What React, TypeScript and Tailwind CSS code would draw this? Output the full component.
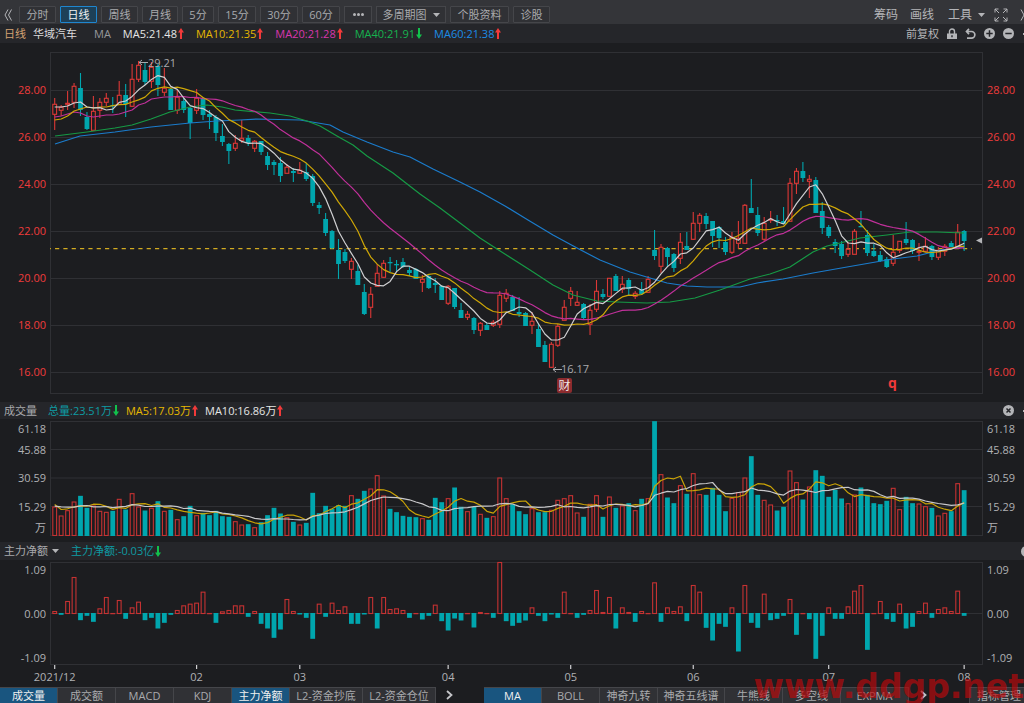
import React from "react";

type Candle = [up: 0 | 1, high: number, top: number, bottom: number, low: number];

const W = 933;
const STEP = 6.45;
const xAt = (i: number) => 4.7 + STEP * i;
const pct = (x: number) => `${(x / W) * 100}%`;

const RED = "#dc3836";
const CYAN = "#00a6ae";
const BG = "#1c1d20";
const GRID = "#2f3034";

// up flag, high, body top, body bottom, low (chart units, 47 per 2.00 of price)
const candles: Candle[] = [
  [1,98,104,114,130],[1,105,107,110,116],[1,91,103,104,110],[1,83,86,102,108],[0,73,88,110,116],
  [0,112,117,129,130],[1,96,111,130,130],[1,98,102,110,118],[1,93,98,102,106],[0,97,105,106,113],
  [1,81,95,104,105],[0,84,95,104,117],[1,64,79,106,107],[1,61,65,79,82],[0,62,70,82,85],
  [1,62,67,81,88],[0,64,66,85,96],[1,68,88,92,96],[0,88,89,110,110],[1,90,97,110,114],
  [0,98,101,110,113],[0,107,108,123,139],[1,89,98,110,114],[0,97,99,115,120],[0,110,114,117,129],
  [0,115,117,133,141],[0,124,136,142,146],[0,143,144,151,164],[1,135,143,148,151],[1,120,138,140,143],
  [0,135,138,143,146],[1,140,141,148,152],[0,141,141,152,155],[0,152,156,165,170],[0,160,162,165,175],
  [0,157,163,176,182],[1,164,167,173,173],[0,168,171,173,182],[1,162,170,173,174],[0,163,172,179,181],
  [0,174,176,203,206],[0,202,205,208,214],[0,213,219,233,236],[0,230,231,248,249],[0,239,250,264,279],
  [0,249,252,261,263],[1,258,261,269,279],[0,265,271,285,285],[0,284,292,314,315],[1,287,294,307,318],
  [1,264,273,286,286],[1,260,263,277,278],[0,257,262,263,272],[0,260,264,265,272],[0,258,262,267,268],
  [0,267,270,273,276],[0,268,269,279,279],[1,275,279,282,292],[0,275,276,288,289],[0,278,283,285,293],
  [0,285,286,300,300],[1,285,286,303,305],[0,288,288,307,309],[0,303,310,318,318],[1,311,314,317,320],
  [0,317,318,330,334],[1,322,323,330,336],[0,323,325,330,330],[1,320,322,325,327],[1,291,295,324,328],
  [1,289,293,298,302],[0,295,297,311,311],[0,297,312,314,317],[0,312,313,326,326],[1,312,321,325,334],
  [0,323,329,347,347],[0,341,345,362,362],[1,342,344,367,368],[1,324,326,345,347],[1,300,307,320,320],
  [1,287,291,298,306],[1,291,302,305,306],[0,303,304,318,319],[1,304,310,324,335],[1,280,291,309,312],
  [0,289,294,297,299],[1,278,278,296,297],[0,274,276,291,291],[1,276,284,289,293],[0,278,280,289,295],
  [1,291,293,296,299],[0,282,289,294,295],[1,276,279,292,293],[0,230,250,256,260],[1,244,247,266,273],
  [0,247,248,257,267],[0,253,254,268,272],[1,233,242,258,264],[0,232,246,250,250],[1,212,223,239,240],
  [1,213,215,223,232],[0,213,216,224,229],[0,221,221,236,247],[0,226,227,238,248],[0,237,242,252,255],
  [1,232,237,252,254],[1,221,238,243,249],[1,204,205,243,243],[0,179,208,213,213],[0,207,215,233,236],
  [1,217,223,239,241],[1,211,219,220,223],[0,215,220,221,226],[0,207,221,224,224],[1,178,183,221,221],
  [1,168,171,183,194],[0,162,171,178,182],[1,175,179,181,198],[0,177,180,213,213],[0,202,211,228,234],
  [0,225,227,236,238],[0,239,242,246,253],[0,241,244,256,259],[1,242,249,254,257],[1,229,231,254,254],
  [0,211,226,227,227],[0,230,235,253,256],[0,244,251,256,257],[0,251,255,261,262],[0,257,259,267,268],
  [1,235,252,263,266],[1,241,241,250,253],[0,222,239,243,245],[0,239,240,251,254],[1,243,251,252,261],
  [1,237,246,251,252],[0,245,246,257,260],[1,247,250,257,260],[1,244,246,251,256],[0,241,243,247,247],
  [1,224,232,248,248],[0,230,231,241,251],
];

const volumes = [
  320,347,331,305,288,324,317,333,336,333,297,329,280,320,332,324,304,333,330,358,349,318,346,339,
  346,333,349,351,364,374,373,382,367,346,324,341,352,366,374,369,279,340,318,327,316,318,286,297,
  273,266,226,287,327,337,348,351,352,355,360,294,307,295,263,321,334,321,342,354,349,233,295,313,
  334,343,325,337,337,330,300,295,286,338,351,312,286,351,290,324,317,310,331,297,295,64,223,293,
  310,256,282,220,283,285,264,285,334,294,277,233,169,285,300,314,332,321,212,247,299,260,211,228,
  291,270,296,310,284,263,285,310,313,303,264,328,291,310,311,319,324,347,339,334,250,271,
].map((v) => (407 - v) / 3);

const netFlow = [
  214,224,184,112,240,227,245,206,172,220,181,236,203,186,240,233,265,248,224,211,197,192,189,156,
  220,248,215,211,197,197,230,214,251,265,293,268,178,214,223,233,296,192,230,189,211,200,251,251,
  223,172,265,172,208,206,211,233,220,238,227,195,243,271,235,241,220,262,217,220,233,67,243,257,
  248,241,203,227,243,223,233,156,220,233,224,211,151,217,172,265,203,217,245,214,220,128,245,203,
  214,200,243,136,156,263,301,251,260,203,334,136,248,263,162,240,236,227,178,284,220,237,356,287,
  203,236,236,200,153,136,329,220,184,237,245,192,265,260,214,189,233,208,203,214,153,227,
].map((v) => (220 - v) / 3);

const ma40 = "5,136 37,132 65,128 82,125 101,119 120,112 140,107 157,105 172,107 185,110 220,113 240,116 257,121 270,126 287,136 303,145 317,156 343,173 370,194 390,208 410,223 430,238 447,249 480,270 503,285 523,295 547,301 567,302 597,303 620,302 645,298 670,290 700,279 720,274 740,267 763,252 777,246 790,243 810,238 837,235 860,232 887,232 914,233";
const ma60 = "5,144 30,136 65,132 101,127 140,123 167,121 190,120 207,119 250,120 280,125 293,132 317,142 343,152 360,157 383,169 410,182 430,192 455,206 478,220 503,235 527,248 550,260 580,272 600,278 617,283 637,286 657,287 690,287 707,283 733,279 763,273 797,267 820,263 843,259 867,256 890,250 914,247";

function average(values: number[], span: number, seed: number[]) {
  return values
    .map((_, i) => {
      const y =
        i < span - 1
          ? seed[i]
          : values.slice(i - span + 1, i + 1).reduce((a, b) => a + b, 0) / span;
      return `${xAt(i).toFixed(1)},${y.toFixed(1)}`;
    })
    .join(" ");
}

const closes = candles.map((c) => (c[0] ? c[2] : c[3]));
const volumeY = volumes.map((v) => 114.5 - v);
const toVol = (z: number) => 114.5 - (407 - z) / 3;

const months = [
  { at: 0, label: "2021/12" },
  { at: 22, label: "02" },
  { at: 38, label: "03" },
  { at: 61, label: "04" },
  { at: 80, label: "05" },
  { at: 99, label: "06" },
  { at: 120, label: "07" },
  { at: 141, label: "08" },
];

function Line({ points, color }: { points: string; color: string }) {
  return <polyline points={points} fill="none" stroke={color} strokeWidth="1.2" strokeLinejoin="round" />;
}

function Arrow({ down = false }: { down?: boolean }) {
  return (
    <svg width="6" height="11" viewBox="0 0 6 11" className={down ? "rotate-180 text-[#12c14c]" : "text-[#f23a3a]"} aria-hidden="true">
      <path d="M3 0 6 4.5H4V11H2V4.5H0Z" fill="currentColor" />
    </svg>
  );
}

function Caret() {
  return (
    <svg width="7" height="4" viewBox="0 0 7 4" aria-hidden="true">
      <path d="M0 0h7L3.500 4Z" fill="#b4b5b8" />
    </svg>
  );
}

function Gear() {
  return (
    <svg width="12" height="12" viewBox="0 0 12 12" aria-hidden="true">
      <path d="M6 1v10M1 6h10M2.500 2.500l7 7M9.500 2.500l-7 7" stroke="#b4b5b8" strokeWidth="2" />
      <circle cx="6" cy="6" r="3.600" fill="#b4b5b8" />
      <circle cx="6" cy="6" r="1.600" fill="#25262a" />
    </svg>
  );
}

function Reading({ text, color, down }: { text: string; color: string; down?: boolean }) {
  return (
    <span className={`flex items-center gap-px ${color}`}>
      {text}
      <Arrow down={down} />
    </span>
  );
}

function Period({ label, width, active = false }: { label: string; width: string; active?: boolean }) {
  return (
    <button
      type="button"
      className={`flex h-[17px] shrink-0 items-center justify-center rounded-[1px] border ${width} ${
        active ? "border-[#1f86cf] bg-[#1d4058] text-[#f0f0f0]" : "border-[#45464a] bg-[#303135] text-[#a9aaad]"
      }`}
    >
      {label}
    </button>
  );
}

function Toolbar() {
  return (
    <nav className="flex h-6 items-end justify-between bg-[#343539] pb-px">
      <div className="flex items-center gap-1">
        <button type="button" aria-label="收起" className="flex w-[15px] justify-center">
          <svg width="8" height="12" viewBox="0 0 8 12" fill="none" stroke="#b4b5b8" aria-hidden="true">
            <path d="M4 .5 1 6l3 5.500M7.500.5l-3 5.500 3 5.500" />
          </svg>
        </button>
        <Period label="分时" width="w-[37px]" />
        <Period label="日线" width="w-[37px]" active />
        <Period label="周线" width="w-[37px]" />
        <Period label="月线" width="w-[36px]" />
        <Period label="5分" width="w-[32px]" />
        <Period label="15分" width="w-[38px]" />
        <Period label="30分" width="w-[38px]" />
        <Period label="60分" width="w-[38px]" />
        <button type="button" aria-label="更多" className="flex h-[17px] w-7 shrink-0 items-center justify-center gap-px border border-[#45464a] bg-[#303135]">
          <i className="size-[3px] rounded-full bg-[#b4b5b8]" />
          <i className="size-[3px] rounded-full bg-[#b4b5b8]" />
          <i className="size-[3px] rounded-full bg-[#b4b5b8]" />
        </button>
        <button type="button" className="flex h-[17px] w-[70px] shrink-0 items-center justify-center gap-[6px] border border-[#45464a] bg-[#303135] text-[#a9aaad]">
          多周期图
          <Caret />
        </button>
        <Period label="个股资料" width="w-[59px]" />
        <Period label="诊股" width="w-[37px]" />
      </div>
      <div className="flex h-[17px] items-center overflow-hidden text-xs text-[#b4b5b8]">
        <button type="button" className="mr-3 shrink-0">筹码</button>
        <button type="button" className="mr-[14px] shrink-0">画线</button>
        <button type="button" className="mr-[9px] flex shrink-0 items-center gap-[6px]">
          工具
          <Caret />
        </button>
        <button type="button" aria-label="全屏" className="mr-3 shrink-0">
          <svg width="14" height="14" viewBox="0 0 14 14" fill="none" stroke="#b4b5b8" aria-hidden="true">
            <path d="M1 4.500V1h3.500M1 1l4 4M9.500 1H13v3.500M13 1 9 5M1 9.500V13h3.500M1 13l4-4M13 9.500V13H9.500M13 13 9 9" />
          </svg>
        </button>
        <svg width="4" height="12" viewBox="0 0 4 12" fill="none" stroke="#b4b5b8" aria-hidden="true">
          <path d="M1 .5 4 6 1 11.500" />
        </svg>
      </div>
    </nav>
  );
}

function InfoBar() {
  return (
    <header className="flex h-[19px] items-center justify-between bg-[#25262a] pl-1">
      <div className="flex items-center">
        <span className="mr-[7px] text-[#d3a273]">日线</span>
        <h1 className="mr-[17px] text-[#dcdcdc]">华域汽车</h1>
        <span className="mr-3 text-[#97989b]">MA</span>
        <div className="flex gap-3">
          <Reading text="MA5:21.48" color="text-[#e6e6e6]" />
          <Reading text="MA10:21.35" color="text-[#e6b800]" />
          <Reading text="MA20:21.28" color="text-[#d936ad]" />
          <Reading text="MA40:21.91" color="text-[#16b34f]" down />
          <Reading text="MA60:21.38" color="text-[#1c8ce6]" />
        </div>
      </div>
      <div className="flex items-center gap-2 overflow-hidden text-[#b4b5b8]">
        <button type="button" className="shrink-0">前复权</button>
        <button type="button" aria-label="锁定" className="shrink-0">
          <svg width="10" height="12" viewBox="0 0 10 12" aria-hidden="true">
            <path d="M2.500 6V3.500a2.500 2.500 0 0 1 5 0V6" fill="none" stroke="#b4b5b8" strokeWidth="1.400" />
            <path d="M0 5.500h10V11H0ZM4.300 7.300v2h1.400v-2Z" fill="#b4b5b8" fillRule="evenodd" />
          </svg>
        </button>
        <button type="button" aria-label="撤销" className="shrink-0">
          <svg width="11" height="12" viewBox="0 0 11 12" fill="none" stroke="#b4b5b8" strokeWidth="1.700" aria-hidden="true">
            <path d="M4 .8 1.500 3.500 4 6.200M1.500 3.500h5a3.300 3.300 0 0 1 0 6.700H2" />
          </svg>
        </button>
        <button type="button" aria-label="放大" className="shrink-0">
          <svg width="11" height="11" viewBox="0 0 11 11" aria-hidden="true">
            <circle cx="5.500" cy="5.500" r="5.500" fill="#b4b5b8" />
            <path d="M5.500 2.300v6.400M2.300 5.500h6.400" stroke="#25262a" strokeWidth="1.500" />
          </svg>
        </button>
        <button type="button" aria-label="缩小" className="shrink-0">
          <svg width="11" height="11" viewBox="0 0 11 11" aria-hidden="true">
            <circle cx="5.500" cy="5.500" r="5.500" fill="#b4b5b8" />
            <path d="M2.300 5.500h6.400" stroke="#25262a" strokeWidth="1.500" />
          </svg>
        </button>
        <span className="w-[2px] overflow-hidden">
          <Gear />
        </span>
      </div>
    </header>
  );
}

function PriceAxis({ side }: { side: string }) {
  return (
    <div className={`flex h-[342px] shrink-0 flex-col justify-between pt-[30px] pb-[14px] text-[#f03c3c] ${side}`}>
      {["28.00", "26.00", "24.00", "22.00", "20.00", "18.00", "16.00"].map((p) => (
        <span key={p}>{p}</span>
      ))}
    </div>
  );
}

function PriceChart() {
  return (
    <section aria-label="日线" className="flex pt-[9px] pb-2">
      <PriceAxis side="w-[50px] pr-1 text-right" />
      <div className="relative h-[342px] min-w-0 flex-1">
        <svg className="block size-full" viewBox={`0 52 ${W} 342`} preserveAspectRatio="none" aria-hidden="true">
          {[90.5, 137.5, 184.5, 231.5, 278.5, 325.5, 372.5].map((y) => (
            <path key={y} d={`M0 ${y}H${W}`} stroke={GRID} />
          ))}
          <rect x=".5" y="52.5" width={W - 1} height="341" fill="none" stroke={GRID} />
          <path d="M0 248.700H922" stroke="#d2ab20" strokeWidth="1.300" strokeDasharray="4.200 4.130" strokeDashoffset="3.300" />
          {candles.map(([up, high, top, bottom, low], i) => {
            const x = xAt(i);
            const color = up ? RED : CYAN;
            return (
              <g key={i}>
                <path d={`M${x} ${high}V${low}`} stroke={color} strokeWidth="1.100" />
                {up ? (
                  <rect x={x - 1.9} y={top + 0.3} width="3.800" height={Math.max(bottom - top, 1)} fill={BG} stroke={color} strokeWidth="1.100" />
                ) : (
                  <rect x={x - 2.4} y={top} width="4.800" height={Math.max(bottom - top, 1.3)} fill={color} />
                )}
              </g>
            );
          })}
          <Line points={ma60} color="#1b7ccc" />
          <Line points={ma40} color="#169a45" />
          <Line points={average(closes, 20, [117,116,114,112,113,116,117,116,115,115,114,112,110,105,103,99,98,97,97])} color="#c0309a" />
          <Line points={average(closes, 10, [120,119,116,111,109,107,108,107,107])} color="#cfa706" />
          <Line points={average(closes, 5, [107,107,106,103])} color="#cfcfd1" />
          <path d="M98 62.500h-9m3-2.500-3 2.500 3 2.500M512 369.500h-9m3-2.500-3 2.500 3 2.500" fill="none" stroke="#a9aaad" />
          <path d="M926 240.500l6-3v6Z" fill="#b4b5b8" />
        </svg>
        <span className="absolute top-[3px] text-[#a9aaad]" style={{ left: pct(98) }}>29.21</span>
        <span className="absolute top-[309px] text-[#a9aaad]" style={{ left: pct(511) }}>16.17</span>
        <span className="absolute top-[326px] flex size-[15px] items-center justify-center rounded-[2px] bg-[#8c2b2e] text-xs leading-none text-[#f0e4e4]" style={{ left: pct(507) }}>财</span>
        <span className="absolute top-[321px] text-sm font-bold text-[#ee3a3a]" style={{ left: pct(838) }}>q</span>
      </div>
      <PriceAxis side="w-[41px] pl-1" />
    </section>
  );
}

function VolumeAxis({ side }: { side: string }) {
  return (
    <div className={`flex h-[115px] shrink-0 flex-col text-[#b0b1b4] ${side}`}>
      <span className="h-4">61.18</span>
      <span className="h-[26px] leading-[26px]">45.88</span>
      <span className="h-[30px] leading-[30px]">30.59</span>
      <span className="h-[27px] leading-[27px]">15.29</span>
      <span className="h-4">万</span>
    </div>
  );
}

function VolumePanel() {
  return (
    <section aria-label="成交量" className="pb-[6px]">
      <header className="mb-[2px] flex h-[17px] items-center justify-between bg-[#25262a] pl-1">
        <div className="flex items-center">
          <h2 className="mr-[11px] text-[#a9aaad]">成交量</h2>
          <div className="flex gap-[7px]">
            <Reading text="总量:23.51万" color="text-[#0e9ba3]" down />
            <Reading text="MA5:17.03万" color="text-[#e6b800]" />
            <Reading text="MA10:16.86万" color="text-[#e6e6e6]" />
          </div>
        </div>
        <div className="flex items-center gap-2">
          <button type="button" aria-label="关闭">
            <svg width="11" height="11" viewBox="0 0 11 11" aria-hidden="true">
              <circle cx="5.500" cy="5.500" r="5.500" fill="#b4b5b8" />
              <path d="m3.500 3.500 4 4m0-4-4 4" stroke="#25262a" strokeWidth="1.500" />
            </svg>
          </button>
          <span className="w-[2px] overflow-hidden">
            <Gear />
          </span>
        </div>
      </header>
      <div className="flex">
        <VolumeAxis side="w-[50px] pr-1 text-right" />
        <svg className="block h-[115px] min-w-0 flex-1" viewBox={`0 0 ${W} 115`} preserveAspectRatio="none" aria-hidden="true">
          {[28.5, 57, 85.5].map((y) => (
            <path key={y} d={`M0 ${y}H${W}`} stroke={GRID} />
          ))}
          <rect x=".5" y=".5" width={W - 1} height="114" fill="none" stroke={GRID} />
          {volumes.map((v, i) =>
            candles[i][0] ? (
              <rect key={i} x={xAt(i) - 1.9} y={115 - v} width="3.800" height={v - 0.5} fill={BG} stroke="#c53232" strokeWidth="1.100" />
            ) : (
              <rect key={i} x={xAt(i) - 2.4} y={114.5 - v} width="4.800" height={v + 0.5} fill={CYAN} />
            ),
          )}
          <Line points={average(volumeY, 5, [314, 329, 327, 321].map(toVol))} color="#c9a206" />
          <Line points={average(volumeY, 10, [319, 321, 322, 322, 318, 317, 321, 321, 320].map(toVol))} color="#c8c8ca" />
        </svg>
        <VolumeAxis side="w-[41px] pl-1" />
      </div>
    </section>
  );
}

function FlowAxis({ side }: { side: string }) {
  return (
    <div className={`flex h-[104px] shrink-0 flex-col justify-between text-[#b0b1b4] ${side}`}>
      <span>1.09</span>
      <span>0.00</span>
      <span>-1.09</span>
    </div>
  );
}

function FlowPanel() {
  return (
    <section aria-label="主力净额">
      <header className="mb-[2px] flex h-[18px] items-center justify-between bg-[#25262a] pl-1">
        <div className="flex items-center gap-3">
          <button type="button" className="flex items-center gap-1 text-[#a9aaad]">
            主力净额
            <Caret />
          </button>
          <Reading text="主力净额:-0.03亿" color="text-[#0e9ba3]" down />
        </div>
        <span className="w-[3px] overflow-hidden">
          <svg width="11" height="11" viewBox="0 0 11 11" aria-hidden="true">
            <circle cx="5.500" cy="5.500" r="5.500" fill="#b4b5b8" />
          </svg>
        </span>
      </header>
      <div className="flex">
        <FlowAxis side="w-[50px] pr-1 text-right" />
        <svg className="block h-[104px] min-w-0 flex-1 overflow-visible" viewBox={`0 0 ${W} 104`} preserveAspectRatio="none" aria-hidden="true">
          <path d={`M0 51.500H${W}`} stroke={GRID} />
          <rect x=".5" y=".5" width={W - 1} height="102" fill="none" stroke={GRID} />
          {netFlow.map((v, i) =>
            v >= 0 ? (
              <rect key={i} x={xAt(i) - 1.9} y={51.5 - v} width="3.800" height={Math.max(v, 0.2)} fill={BG} stroke="#c53232" strokeWidth="1.100" />
            ) : (
              <rect key={i} x={xAt(i) - 2.4} y="51" width="4.800" height={0.5 - v} fill={CYAN} />
            ),
          )}
          {months.map((m) => (
            <path key={m.label} d={`M${xAt(m.at)} 103v4`} stroke="#d0d0d2" strokeWidth="1.200" />
          ))}
        </svg>
        <FlowAxis side="w-[41px] pl-1" />
      </div>
      <div className="relative mr-[41px] ml-[50px] h-[21px] text-[#b0b1b4]">
        {months.map((m) => (
          <span key={m.label} className="absolute top-[3px] -translate-x-1/2" style={{ left: pct(xAt(m.at)) }}>
            {m.label}
          </span>
        ))}
      </div>
    </section>
  );
}

function Tab({ label, width, active = false }: { label: string; width: string; active?: boolean }) {
  return (
    <button
      type="button"
      className={`h-4 shrink-0 border-t border-r border-[#45464a] ${width} ${
        active ? "bg-[#19557f] text-[#f0f0f0]" : "bg-[#303135] text-[#a9aaad]"
      }`}
    >
      {label}
    </button>
  );
}

function Chevron() {
  return (
    <svg width="7" height="10" viewBox="0 0 7 10" fill="none" stroke="#c4c5c8" strokeWidth="1.800" aria-hidden="true">
      <path d="m1 1 4.500 4L1 9" />
    </svg>
  );
}

function Tabs() {
  return (
    <footer className="relative flex h-4 items-center justify-between">
      <div className="flex items-center">
        <Tab label="成交量" width="w-[58px]" active />
        <Tab label="成交额" width="w-[58px]" />
        <Tab label="MACD" width="w-[58px]" />
        <Tab label="KDJ" width="w-[58px]" />
        <Tab label="主力净额" width="w-[58px]" active />
        <Tab label="L2-资金抄底" width="w-[73px]" />
        <Tab label="L2-资金仓位" width="w-[73px]" />
        <button type="button" aria-label="更多指标" className="flex w-12 shrink-0 pl-[10px]">
          <Chevron />
        </button>
        <Tab label="MA" width="w-[58px]" active />
        <Tab label="BOLL" width="w-[58px]" />
        <Tab label="神奇九转" width="w-[58px]" />
        <Tab label="神奇五线谱" width="w-[67px]" />
        <Tab label="牛熊线" width="w-[58px]" />
        <Tab label="多空线" width="w-[58px]" />
        <Tab label="EXPMA" width="w-[68px]" />
        <button type="button" aria-label="更多均线" className="flex shrink-0 pl-[11px]">
          <Chevron />
        </button>
      </div>
      <button type="button" className="h-4 w-[55px] shrink-0 overflow-hidden border-t border-l border-[#45464a] bg-[#303135] pl-[7px] text-left whitespace-nowrap text-[#a9aaad]">
        指标管理
      </button>
      <span className="pointer-events-none absolute right-0 bottom-[-4px] font-['DejaVu_Sans'] text-[33px] leading-10 font-bold text-[#b80a0c]/70">
        www.ddgp.net
      </span>
    </footer>
  );
}

export default function App() {
  return (
    <main className="min-h-screen overflow-hidden bg-[#1c1d20] font-['Open_Sans','Noto_Sans_CJK_SC',sans-serif] text-[11px] leading-4 whitespace-nowrap">
      <Toolbar />
      <InfoBar />
      <PriceChart />
      <VolumePanel />
      <FlowPanel />
      <Tabs />
    </main>
  );
}
